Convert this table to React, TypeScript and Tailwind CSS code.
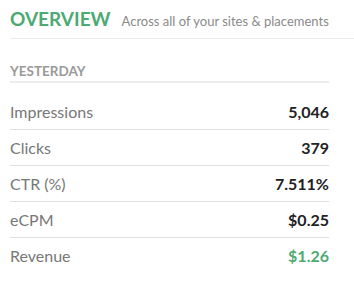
import React from "react";

const rows: { label: string; value: string; green?: boolean }[] = [
  { label: "Impressions", value: "5,046" },
  { label: "Clicks", value: "379" },
  { label: "CTR (%)", value: "7.511%" },
  { label: "eCPM", value: "$0.25" },
  { label: "Revenue", value: "$1.26", green: true },
];

export default function App() {
  return (
    <div
      className="w-[354px] h-[284px] bg-white pl-[10px]"
      style={{ fontFamily: "Lato, 'Open Sans', Arial, sans-serif" }}
    >
      <div className="flex items-baseline gap-[11px] pt-[7px] h-[39px] border-b border-[#ececec]">
        <span className="text-[19px] font-bold text-[#4caa72] leading-[24px]">
          OVERVIEW
        </span>
        <span className="text-[13px] text-[#8a8a8a] leading-[16px]">
          Across all of your sites &amp; placements
        </span>
      </div>
      <div className="w-[319px]">
        <div className="pt-[24px] pb-[2px] border-b-2 border-[#ececec] text-[13.5px] font-bold text-[#9a9a9a] leading-[16px]">
          YESTERDAY
        </div>
        <div className="mt-[11px]">
          {rows.map((r, i) => (
            <div
              key={r.label}
              className={
                "flex justify-between items-center h-[36px] text-[16px] leading-[18px] " +
                (i < rows.length - 1 ? "border-b border-[#e0e0e0]" : "")
              }
            >
              <span className="text-[#777777]">{r.label}</span>
              <span className={"font-bold " + (r.green ? "text-[#4caa72]" : "text-[#222222]")}>{r.value}</span>
            </div>
          ))}
        </div>
      </div>
    </div>
  );
}
